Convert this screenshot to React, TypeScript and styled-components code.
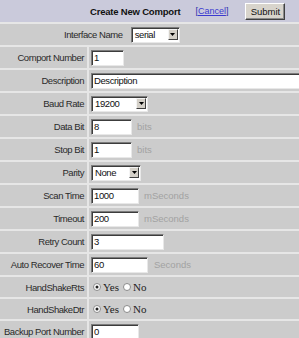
import React from "react";
import styled, {createGlobalStyle} from "styled-components";

const GlobalStyle = createGlobalStyle`
  html, body {
    margin: 0;
    padding: 0;
    background: #e6e6e6;
    overflow: hidden;
  }
  body {
    font-family: "Liberation Sans", Arial, sans-serif;
  }
`;

type Row = {
    label: string;
    kind: "input" | "select" | "radio";
    value?: string;
    width?: number;
    unit?: string;
    unitGap?: number;
    short?: boolean;
};

const rows: Row[] = [
    {label: "Comport Number", kind: "input", value: "1", width: 33},
    {label: "Description", kind: "input", value: "Description", width: 230},
    {label: "Baud Rate", kind: "select", value: "19200", width: 57},
    {label: "Data Bit", kind: "input", value: "8", width: 41, unit: "bits", unitGap: 5},
    {label: "Stop Bit", kind: "input", value: "1", width: 41, unit: "bits", unitGap: 5},
    {label: "Parity", kind: "select", value: "None", width: 50},
    {label: "Scan Time", kind: "input", value: "1000", width: 48, unit: "mSeconds", unitGap: 5},
    {label: "Timeout", kind: "input", value: "200", width: 48, unit: "mSeconds", unitGap: 5},
    {label: "Retry Count", kind: "input", value: "3", width: 73},
    {label: "Auto Recover Time", kind: "input", value: "60", width: 57, unit: "Seconds", unitGap: 6},
    {label: "HandShakeRts", kind: "radio", short: true},
    {label: "HandShakeDtr", kind: "radio", short: true},
    {label: "Backup Port Number", kind: "input", value: "0", width: 48},
];

const App = () => (
    <>
        <GlobalStyle/>
        <Form>
            <Header>
                <Title>Create New Comport</Title>
                <Cancel>[<CancelLink>Cancel</CancelLink>]</Cancel>
                <SubmitButton>Submit</SubmitButton>
            </Header>
            <WideCell>
                <Label>Interface Name</Label>
                <Select $w={49}>
                    <SelectText>serial</SelectText>
                    <DropButton><Arrow/></DropButton>
                </Select>
            </WideCell>
            {rows.map((row) => (
                <React.Fragment key={row.label}>
                    <LabelCell $short={row.short}>
                        <Label>{row.label}</Label>
                    </LabelCell>
                    <ValueCell $short={row.short}>
                        {row.kind === "input" && (
                            <TextBox $w={row.width || 40}>{row.value}</TextBox>
                        )}
                        {row.kind === "select" && (
                            <Select $w={row.width || 50}>
                                <SelectText>{row.value}</SelectText>
                                <DropButton><Arrow/></DropButton>
                            </Select>
                        )}
                        {row.kind === "radio" && (
                            <>
                                <Radio checked/>
                                <RadioText>Yes</RadioText>
                                <Radio/>
                                <RadioText>No</RadioText>
                            </>
                        )}
                        {row.unit && <Unit $gap={row.unitGap || 5}>{row.unit}</Unit>}
                    </ValueCell>
                </React.Fragment>
            ))}
        </Form>
    </>
);

export default App;

const Arrow = () => (
    <svg width="5" height="3" viewBox="0 0 5 3">
        <path d="M0 0H5L2.5 3Z" fill="#000"/>
    </svg>
);

const Radio = ({checked}: { checked?: boolean }) => (
    <RadioIcon width="8" height="8" viewBox="0 0 8 8">
        <circle cx="4" cy="4" r="3.5" fill="#fff" stroke="#8a8a8a"/>
        {checked && <circle cx="4" cy="4" r="1.5" fill="#222"/>}
    </RadioIcon>
);

const Form = styled.div`
  display: grid;
  grid-template-columns: 87px 1fr;
  column-gap: 2px;
  row-gap: 2px;
  width: 299px;
  background: #e6e6e6;
  color: #2a2a2a;
  font-size: 9.5px;
`

const Header = styled.div`
  grid-column: 1 / -1;
  display: flex;
  align-items: center;
  height: 22px;
  padding-left: 90px;
  background: #cacadb;
  white-space: nowrap;
`

const Title = styled.span`
  font-weight: bold;
  font-size: 9.5px;
  letter-spacing: -0.2px;
  color: #111;
`

const Cancel = styled.span`
  margin-left: 15px;
  font-size: 9px;
  color: #3333aa;
`

const CancelLink = styled.span`
  text-decoration: underline;
  color: #3a3ad0;
`

const SubmitButton = styled.span`
  display: inline-flex;
  align-items: center;
  justify-content: center;
  flex: none;
  box-sizing: border-box;
  margin-left: 17px;
  width: 40px;
  height: 17px;
  background: #d8d4cc;
  border: 1px solid;
  border-color: #fff #404040 #404040 #fff;
  box-shadow: inset -1px -1px 0 #8a8a8a;
  font-size: 9.5px;
  color: #111;
`

const WideCell = styled.div`
  grid-column: 1 / -1;
  display: flex;
  align-items: center;
  gap: 8px;
  height: 21px;
  padding-left: 64px;
  background: #cccccc;
`

const LabelCell = styled.div<{ $short?: boolean }>`
  display: flex;
  align-items: center;
  justify-content: flex-end;
  height: ${p => p.$short ? 20 : 21}px;
  padding-right: 3px;
  background: #cccccc;
`

const ValueCell = styled.div<{ $short?: boolean }>`
  display: flex;
  align-items: center;
  height: ${p => p.$short ? 20 : 21}px;
  padding-left: 2px;
  background: #cccccc;
  white-space: nowrap;
  overflow: hidden;
`

const Label = styled.span`
  white-space: nowrap;
  letter-spacing: -0.45px;
`

const TextBox = styled.span<{ $w: number }>`
  display: inline-flex;
  align-items: center;
  flex: none;
  box-sizing: border-box;
  width: ${p => p.$w}px;
  height: 16px;
  padding-left: 2px;
  background: #fff;
  border: 1px solid;
  border-color: #7c7c7c #e8e8e8 #e8e8e8 #7c7c7c;
  box-shadow: inset 1px 1px 0 #3c3c3c;
  font-size: 9.5px;
  letter-spacing: -0.4px;
  color: #111;
`

const Select = styled.span<{ $w: number }>`
  display: inline-flex;
  align-items: center;
  flex: none;
  box-sizing: border-box;
  width: ${p => p.$w}px;
  height: 16px;
  padding: 0 1px 0 3px;
  background: #fff;
  border: 1px solid;
  border-color: #7c7c7c #e8e8e8 #e8e8e8 #7c7c7c;
  box-shadow: inset 1px 1px 0 #3c3c3c;
  font-size: 9.5px;
  letter-spacing: -0.4px;
  color: #111;
`

const SelectText = styled.span`
  flex: 1;
`

const DropButton = styled.span`
  display: inline-flex;
  align-items: center;
  justify-content: center;
  box-sizing: border-box;
  width: 10px;
  height: 11px;
  background: #d4d0c8;
  border: 1px solid;
  border-color: #f4f4f4 #404040 #404040 #f4f4f4;
`

const Unit = styled.span<{ $gap: number }>`
  margin-left: ${p => p.$gap}px;
  color: #a2a2a2;
  font-size: 9.5px;
`

const RadioIcon = styled.svg`
  flex: none;
  margin: 0 2px 0 2px;
`

const RadioText = styled.span`
  font-family: "Liberation Serif", "Times New Roman", serif;
  font-size: 11px;
  color: #222;
  margin-right: 2px;
`
